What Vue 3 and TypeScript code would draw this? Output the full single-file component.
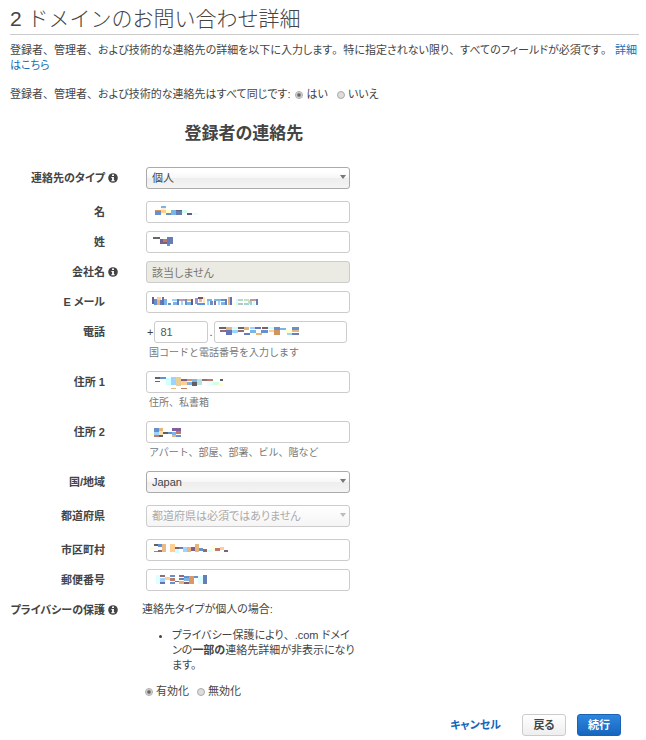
<script setup lang="ts">
import { ref } from 'vue'

type Block = [x: number, y: number, w: number, h: number, fill: string]

interface Field {
  id: string
  label: string
  kind: 'text' | 'select' | 'phone'
  info?: boolean
  disabled?: boolean
  value?: string
  hint?: string
  mask?: Block[]
}

const fields: Field[] = [
  { id: 'type', label: '連絡先のタイプ', kind: 'select', info: true, value: '個人' },
  {
    id: 'first', label: '名', kind: 'text',
    mask: [
      [15, 5, 5, 2, '#7bb5e8'], [9, 9, 6, 1, '#d29560'], [9, 10, 6, 4, '#6691d0'],
      [15, 7, 5, 2, '#fdeedd'], [15, 9, 5, 3, '#ffce92'], [15, 12, 5, 2, '#feffcf'],
      [20, 9, 5, 3, '#feffcf'], [20, 12, 5, 2, '#6691d0'], [25, 9, 5, 5, '#7bb5e8'],
      [30, 9, 6, 1, '#5d6287'], [30, 10, 6, 4, '#667db8'], [36, 9, 5, 3, '#cffff2'],
      [41, 12, 5, 2, '#625f82'], [46, 12, 6, 2, '#e7fffd'],
    ],
  },
  {
    id: 'last', label: '姓', kind: 'text',
    mask: [
      [7, 6, 7, 2, '#666666'], [14, 8, 3, 3, '#66679a'], [14, 11, 7, 2, '#815f80'],
      [17, 8, 4, 3, '#bd7a68'], [21, 6, 6, 7, '#667db8'], [21, 13, 3, 2, '#6691d0'],
    ],
  },
  { id: 'company', label: '会社名', kind: 'text', info: true, disabled: true, value: '該当しません' },
  {
    id: 'mail', label: 'E メール', kind: 'text',
    mask: [
      [6, 6, 2, 7, '#665f93'], [8, 8, 3, 6, '#6691d0'], [11, 6, 4, 3, '#ffce92'], [11, 9, 3, 5, '#e8b47a'],
      [14, 9, 2, 5, '#667db8'], [16, 6, 2, 8, '#5f72b4'], [18, 8, 3, 6, '#7bb5e8'], [22, 12, 3, 2, '#6691d0'],
      [26, 8, 5, 2, '#9dd4ff'], [27, 11, 4, 3, '#7bb5e8'], [31, 8, 2, 6, '#667db8'], [33, 8, 6, 2, '#b39ab0'],
      [35, 10, 2, 4, '#9dd4ff'], [39, 8, 2, 6, '#6691d0'], [41, 8, 4, 2, '#e8b47a'], [41, 11, 4, 3, '#7bb5e8'],
      [45, 8, 2, 6, '#625f82'], [49, 7, 3, 6, '#9a92d4'], [52, 6, 6, 2, '#7a5368'], [51, 12, 8, 2, '#5795df'],
      [53, 8, 3, 3, '#eabe82'], [57, 6, 2, 6, '#ffe6ae'], [61, 8, 5, 2, '#7bb5e8'], [61, 10, 2, 4, '#9dd4ff'],
      [64, 10, 3, 4, '#6691d0'], [68, 8, 7, 2, '#7bb5e8'], [68, 10, 2, 4, '#936d80'], [72, 10, 2, 4, '#9dd4ff'],
      [75, 8, 4, 2, '#6691d0'], [75, 11, 4, 3, '#7bb5e8'], [79, 8, 2, 6, '#667db8'], [82, 6, 2, 8, '#e8b47a'],
      [84, 6, 2, 8, '#5f72b4'], [87, 12, 2, 2, '#feffcf'], [90, 8, 2, 6, '#d5ffff'], [92, 8, 5, 2, '#b3dac9'],
      [92, 12, 5, 2, '#b8c7bb'], [98, 8, 5, 2, '#b0e9ce'], [98, 12, 5, 2, '#a3d4ca'], [102, 9, 2, 4, '#cddfae'],
      [104, 8, 6, 2, '#bd9c92'], [104, 10, 2, 4, '#98cbf0'], [107, 10, 2, 4, '#ceffff'], [110, 8, 2, 6, '#667db8'],
    ],
  },
  {
    id: 'phone', label: '電話', kind: 'phone', hint: '国コードと電話番号を入力します',
    mask: [
      [5, 6, 8, 2, '#666666'], [6, 9, 6, 2, '#936d70'], [12, 6, 6, 3, '#e8b47a'], [12, 9, 6, 5, '#6475bd'],
      [18, 6, 6, 2, '#cffff2'], [18, 9, 6, 3, '#9dd4ff'], [24, 6, 6, 2, '#666666'], [24, 9, 6, 2, '#936d70'],
      [30, 6, 5, 3, '#e8b47a'], [30, 12, 6, 2, '#667db8'], [36, 6, 5, 2, '#9dd4ff'], [36, 9, 6, 3, '#7bb5e8'],
      [41, 6, 6, 2, '#6475bd'], [42, 12, 6, 2, '#e8b47a'], [47, 9, 7, 3, '#6691d0'], [48, 6, 6, 2, '#815f60'],
      [54, 6, 6, 2, '#ceffff'], [55, 9, 5, 2, '#ffce92'], [60, 6, 6, 3, '#6691d0'], [60, 9, 6, 5, '#d29560'],
      [66, 7, 6, 2, '#7bb5e8'], [72, 9, 6, 3, '#feffcf'], [73, 12, 6, 2, '#9dd4ff'],
      [78, 6, 7, 3, '#6691d0'], [78, 9, 7, 2, '#e8b47a'], [78, 12, 7, 2, '#667db8'],
    ],
  },
  {
    id: 'addr1', label: '住所 1', kind: 'text', hint: '住所、私書箱',
    mask: [
      [9, 6, 5, 2, '#5f6272'], [14, 6, 6, 2, '#6691d0'], [9, 10, 5, 1, '#666666'], [20, 7, 5, 7, '#cfffff'],
      [25, 6, 5, 8, '#9dd4ff'], [25, 17, 5, 1, '#e8b47a'], [30, 6, 5, 9, '#e9ce92'], [35, 8, 6, 2, '#815f80'],
      [35, 10, 6, 4, '#ffce92'], [35, 17, 6, 1, '#bd7a68'], [41, 8, 5, 2, '#d29560'], [41, 11, 5, 3, '#7bb5e8'],
      [46, 8, 5, 3, '#7bb5e8'], [46, 11, 5, 4, '#625f62'], [51, 8, 5, 6, '#b3e4e0'], [56, 8, 5, 2, '#936d70'],
      [61, 8, 6, 2, '#bd7a68'], [61, 10, 6, 5, '#e7fffd'], [67, 11, 6, 3, '#ceffdf'], [74, 8, 3, 2, '#625f62'],
      [72, 13, 5, 2, '#feffcf'],
    ],
  },
  {
    id: 'addr2', label: '住所 2', kind: 'text', hint: 'アパート、部屋、部署、ビル、階など',
    mask: [
      [4, 12, 4, 2, '#feffcf'], [8, 7, 5, 4, '#6691d0'], [13, 7, 4, 3, '#e8b47a'], [8, 11, 9, 3, '#9dd4ff'],
      [13, 10, 4, 4, '#fddcae'], [8, 14, 5, 2, '#bd7a68'], [13, 14, 4, 2, '#625f72'], [17, 11, 5, 2, '#625f62'],
      [22, 11, 5, 2, '#6691d0'], [26, 7, 9, 3, '#815f9a'], [26, 11, 4, 3, '#7bb5e8'], [30, 10, 5, 3, '#bd7a68'],
      [26, 14, 4, 2, '#e8b47a'], [30, 14, 5, 2, '#6691d0'],
    ],
  },
  { id: 'country', label: '国/地域', kind: 'select', value: 'Japan' },
  { id: 'state', label: '都道府県', kind: 'select', disabled: true, value: '都道府県は必須ではありません' },
  {
    id: 'city', label: '市区町村', kind: 'text',
    mask: [
      [4, 8, 4, 3, '#feffcf'], [8, 5, 4, 2, '#625f62'], [12, 5, 4, 3, '#6691d0'], [8, 12, 4, 1, '#6691d0'],
      [12, 11, 4, 2, '#936d70'], [16, 5, 4, 8, '#e9b98c'], [24, 5, 5, 8, '#ffce92'], [29, 8, 4, 2, '#815f60'],
      [29, 10, 4, 4, '#cfffff'], [33, 8, 4, 2, '#667db8'], [37, 8, 4, 5, '#9dd4ff'], [41, 8, 4, 5, '#e8b47a'],
      [45, 8, 4, 4, '#815f80'], [49, 5, 4, 8, '#e8b47a'], [53, 9, 4, 3, '#6691d0'], [57, 10, 4, 3, '#936d60'],
      [61, 11, 4, 2, '#cfffff'], [65, 6, 4, 7, '#feffdf'], [69, 9, 5, 3, '#bd7a68'], [74, 8, 4, 3, '#fdce92'],
      [78, 11, 4, 2, '#815f80'],
    ],
  },
  {
    id: 'zip', label: '郵便番号', kind: 'text',
    mask: [
      [10, 6, 4, 9, '#ddffff'], [14, 6, 5, 2, '#936d70'], [14, 9, 5, 4, '#9dd4ff'], [14, 13, 5, 2, '#6475ad'],
      [19, 8, 5, 3, '#ffce92'], [24, 6, 5, 2, '#6691d0'], [24, 9, 5, 3, '#bd7a68'], [24, 13, 5, 2, '#6691d0'],
      [29, 12, 4, 1, '#936d70'], [33, 6, 5, 2, '#936d70'], [33, 9, 5, 2, '#667db8'], [33, 12, 5, 3, '#e8b47a'],
      [38, 7, 5, 2, '#6691d0'], [38, 9, 5, 3, '#7bb5e8'], [38, 13, 5, 2, '#815f60'], [43, 7, 5, 8, '#d99865'],
      [48, 7, 4, 2, '#6691d0'], [52, 7, 5, 8, '#ddffff'], [57, 6, 4, 9, '#667db8'],
    ],
  },
]

// Splits a sentence so that each full-width punctuation mark can keep its full advance.
const split = (s: string): string[] => s.split(/([、。])/).filter(Boolean)
const isMark = (s: string): boolean => s === '、' || s === '。'

const intro = split('登録者、管理者、および技術的な連絡先の詳細を以下に入力します。特に指定されない限り、すべてのフィールドが必須です。')
const sameText = split('登録者、管理者、および技術的な連絡先はすべて同じです:')

const same = ref('yes')
const privacy = ref('on')
</script>

<template>
  <main class="page">
    <h1>2 ドメインのお問い合わせ詳細</h1>
    <p class="intro">
      <span v-for="(t, i) in intro" :key="i" :class="{ mark: isMark(t) }">{{ t }}</span>{{ ' ' }}<a href="#">詳細<wbr />はこちら</a>
    </p>
    <div class="same" role="radiogroup" aria-labelledby="same-label">
      <span id="same-label"><span v-for="(t, i) in sameText" :key="i" :class="{ mark: isMark(t) }">{{ t }}</span></span>
      <label class="radio"><input v-model="same" type="radio" name="same" value="yes" />はい</label>
      <label class="radio"><input v-model="same" type="radio" name="same" value="no" />いいえ</label>
    </div>

    <form @submit.prevent>
      <div class="contact">
        <h2>登録者の連絡先</h2>
        <div v-for="f in fields" :key="f.id" class="row" :class="{ tall: f.kind === 'select' }">
          <div class="name" :class="{ plain: !f.info }">
            <label :for="f.id">{{ f.label }}</label>
            <svg v-if="f.info" class="info" viewBox="0 0 10 10" aria-hidden="true">
              <circle cx="5" cy="5" r="4.8" fill="#444" />
              <path d="M4 1.6h2v1.5H4zM3.4 4h2.5v3.2h.8v1H3.3v-1h.8V5h-.7z" fill="#fff" />
            </svg>
          </div>
          <div class="field">
            <div v-if="f.kind === 'select'" class="box">
              <select :id="f.id" :disabled="f.disabled">
                <option>{{ f.value }}</option>
              </select>
              <svg class="arrow" viewBox="0 0 6 4" aria-hidden="true"><path d="M0 0h6L3 4z" fill="currentColor" /></svg>
            </div>
            <div v-else-if="f.kind === 'text'" class="box">
              <input :id="f.id" type="text" :value="f.value" :disabled="f.disabled" />
              <svg v-if="f.mask" class="mask" aria-hidden="true">
                <rect v-for="(b, i) in f.mask" :key="i" :x="b[0]" :y="b[1]" :width="b[2]" :height="b[3]" :fill="b[4]" />
              </svg>
            </div>
            <div v-else class="phone">
              <span>+</span>
              <div class="box code"><input type="text" value="81" aria-labelledby="phone-hint" /></div>
              <span>.</span>
              <div class="box number">
                <input :id="f.id" type="text" />
                <svg class="mask" aria-hidden="true">
                  <rect v-for="(b, i) in f.mask" :key="i" :x="b[0]" :y="b[1]" :width="b[2]" :height="b[3]" :fill="b[4]" />
                </svg>
              </div>
            </div>
            <div v-if="f.hint" :id="f.id + '-hint'" class="hint">{{ f.hint }}</div>
          </div>
        </div>

        <div class="row">
          <div class="name">
            <span id="privacy-label">プライバシーの保護</span>
            <svg class="info" viewBox="0 0 10 10" aria-hidden="true">
              <circle cx="5" cy="5" r="4.8" fill="#444" />
              <path d="M4 1.6h2v1.5H4zM3.4 4h2.5v3.2h.8v1H3.3v-1h.8V5h-.7z" fill="#fff" />
            </svg>
          </div>
          <div class="privacy" role="radiogroup" aria-labelledby="privacy-label">
            <p>連絡先タイプが個人の場合:</p>
            <ul>
              <li>プライバシー保護により<span class="mark">、</span>.com ドメイ<br />ンの<b>一部の</b>連絡先詳細が非表示になり<br />ます。</li>
            </ul>
            <div class="choices">
              <label class="radio"><input v-model="privacy" type="radio" name="privacy" value="on" />有効化</label>
              <label class="radio"><input v-model="privacy" type="radio" name="privacy" value="off" />無効化</label>
            </div>
          </div>
        </div>
      </div>

      <div class="actions">
        <a href="#">キャンセル</a>
        <button type="button">戻る</button>
        <button type="submit" class="primary">続行</button>
      </div>
    </form>
  </main>
</template>

<style>
body {
  background: #fff;
}
</style>

<style scoped>
* {
  box-sizing: border-box;
}
.page {
  padding: 4px 7px 4px 10px;
  color: #444;
  font: 11px/15px "Liberation Sans", "Noto Sans CJK JP", sans-serif;
  font-feature-settings: "palt";
}
h1 {
  margin: 0 0 8px;
  padding-bottom: 1px;
  border-bottom: 1px solid #ccc;
  font-size: 21px;
  line-height: 29px;
  font-weight: 300;
  font-feature-settings: normal;
}
p {
  margin: 0;
}
a {
  color: #146eb4;
  text-decoration: none;
}
.intro {
  word-break: keep-all;
}
.mark {
  font-feature-settings: normal;
}
.same {
  display: flex;
  align-items: center;
  margin-top: 14px;
}
.radio {
  display: inline-flex;
  align-items: center;
  gap: 3px;
}
.same .radio {
  margin-left: 5px;
}
.same .radio + .radio {
  margin-left: 9px;
}
.radio input {
  appearance: none;
  width: 8px;
  height: 8px;
  margin: 0;
  border: 1px solid #aaa;
  border-radius: 50%;
  background: #ddd;
}
.radio input:checked {
  background: radial-gradient(circle, #666 0 1px, #eee 3px);
}
h2 {
  margin: 20px 0 22px;
  padding-left: 128px;
  text-align: center;
  font-size: 17px;
  line-height: 23px;
}
.contact {
  max-width: 340px;
}
.row {
  display: grid;
  grid-template-columns: 108px minmax(0, 1fr);
  column-gap: 28px;
  margin-bottom: 8px;
}
.row.tall {
  margin-bottom: 12px;
}
.name {
  display: flex;
  align-items: center;
  justify-content: flex-end;
  gap: 3px;
  height: 22px;
  font-weight: bold;
  white-space: nowrap;
}
.name.plain {
  padding-right: 13px;
}
.info {
  flex: none;
  width: 10px;
  height: 10px;
}
.box {
  position: relative;
  display: flex;
}
.box input,
.box select {
  width: 100%;
  height: 22px;
  margin: 0;
  padding: 0 5px;
  border: 1px solid #ccc;
  border-radius: 3px;
  background: #fff;
  color: #555;
  font: inherit;
  font-feature-settings: inherit;
}
.box input:disabled {
  background: #ebebe4;
  color: #777;
}
.box select {
  appearance: none;
  border-color: #aaa;
  background: linear-gradient(#fff 20%, #f6f6f6 50%, #eee 52%, #f4f4f4);
  color: #444;
  opacity: 1;
}
.box select:disabled {
  border-color: #ccc;
  background: linear-gradient(#fff, #f5f5f5);
  color: #aaa;
}
.arrow {
  position: absolute;
  top: 8px;
  right: 4px;
  width: 6px;
  height: 4px;
  color: #777;
  pointer-events: none;
}
select:disabled + .arrow {
  color: #bbb;
}
.mask {
  position: absolute;
  inset: 0;
  width: 100%;
  height: 100%;
  pointer-events: none;
  shape-rendering: crispEdges;
}
.phone {
  display: flex;
  align-items: center;
  gap: 1px;
  padding: 0 3px 0 1px;
}
.code {
  flex: 0 0 54px;
}
.number {
  flex: 1;
}
.hint {
  height: 20px;
  padding-left: 3px;
  color: #777;
  font-size: 10px;
  line-height: 20px;
  font-feature-settings: normal;
}
.privacy {
  margin: 3px -8px 0 -4px;
}
.privacy ul {
  margin: 11px 0;
  padding-left: 30px;
}
.privacy li {
  white-space: nowrap;
}
.choices {
  display: flex;
  gap: 8px;
  padding-left: 3px;
}
.actions {
  display: flex;
  justify-content: flex-end;
  align-items: center;
  gap: 11px;
  margin: 15px 18px 0 0;
}
.actions a {
  margin-right: 10px;
  color: #1166bb;
  font-weight: bold;
}
button {
  width: 44px;
  height: 22px;
  padding: 0;
  border: 1px solid #ccc;
  border-radius: 3px;
  background: linear-gradient(#fff, #eee);
  color: #444;
  font: inherit;
  font-feature-settings: inherit;
  font-weight: bold;
}
.primary {
  border-color: #1a62b3;
  background: linear-gradient(#2e86de, #1766be);
  color: #fff;
}
</style>
